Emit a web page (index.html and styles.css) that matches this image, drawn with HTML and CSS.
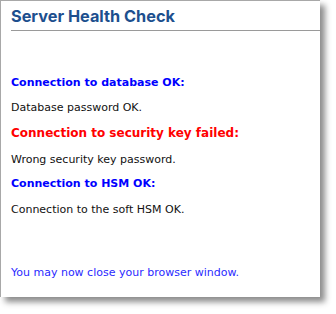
FILE: index.html
```html
<!DOCTYPE html>
<html>
<head>
<meta charset="utf-8">
<link rel="stylesheet" href="styles.css">
</head>
<body>
<div class="panel">
  <h1 class="title">Server Health Check</h1>
  <div class="content">
    <p class="line ok gap9">Connection to database OK:</p>
    <p class="line msg gap9">Database password OK.</p>
    <p class="line fail gap11">Connection to security key failed:</p>
    <p class="line msg gap8">Wrong security key password.</p>
    <p class="line ok gap10">Connection to HSM OK:</p>
    <p class="line msg gap47">Connection to the soft HSM OK.</p>
    <p class="line close">You may now close your browser window.</p>
  </div>
</div>
</body>
</html>
```
FILE: styles.css
```css
html, body {
  margin: 0;
  padding: 0;
  background: #fff;
}
body {
  padding-bottom: 17px;
}
.panel {
  width: 320px;
  height: 297px;
  box-sizing: border-box;
  overflow: hidden;
  border-left: 1px solid #a8a8a8;
  border-top: 1px solid #a8a8a8;
  background: #fff;
  box-shadow: 5px 5px 6px rgba(0,0,0,0.45);
  padding: 0 0 0 10px;
}
.title {
  margin: 0;
  padding: 5px 0 0 0;
  height: 24px;
  border-bottom: 1px solid #9a9a9a;
  font-family: "Inter", "Open Sans", sans-serif;
  font-weight: 700;
  font-size: 16.3px;
  line-height: 20px;
  color: #1d4f8e;
}
.content {
  padding-top: 44px;
  font-family: "DejaVu Sans", Verdana, sans-serif;
}
.line {
  margin: 0;
  line-height: 16px;
}
.gap8 { margin-bottom: 8px; }
.gap9 { margin-bottom: 9px; }
.gap10 { margin-bottom: 10px; }
.gap11 { margin-bottom: 11px; }
.gap47 { margin-bottom: 47px; }
.ok {
  font-size: 11px;
  font-weight: 700;
  color: #0000ff;
}
.fail {
  font-size: 12px;
  font-weight: 700;
  color: #ff0000;
}
.msg {
  font-size: 11px;
  color: #111;
}
.close {
  font-size: 11px;
  color: #2a2aff;
}
```
